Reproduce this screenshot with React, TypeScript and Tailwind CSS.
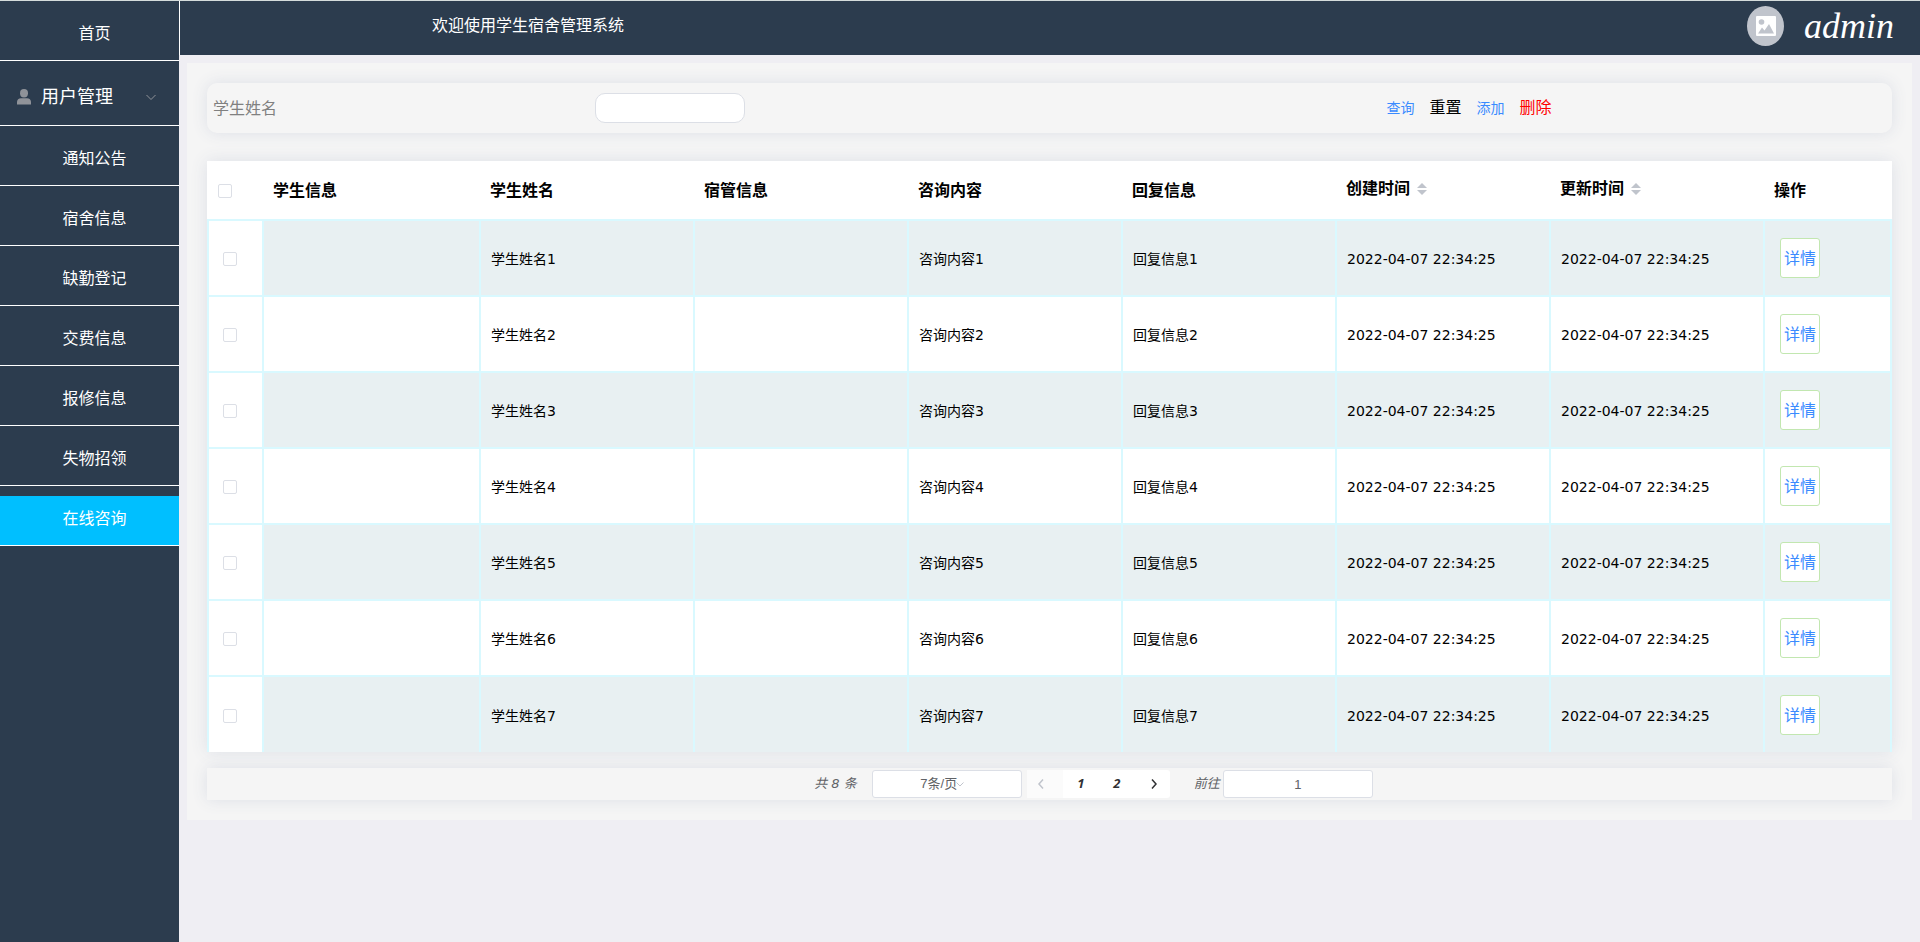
import React from "react";

const menu = ["通知公告", "宿舍信息", "缺勤登记", "交费信息", "报修信息", "失物招领", "在线咨询"];
const rows = [1, 2, 3, 4, 5, 6, 7];
const time = "2022-04-07 22:34:25";
const shadow = "shadow-[0_0_16px_#dcdfe6]";
const box = "block size-[14px] appearance-none rounded-[2px] border border-[#dcdfe6] bg-white";
const edge = "border-2 border-[#d9f9ff] group-last:border-b-0";
const cell = "border-2 border-[#d9f9ff] px-[10px] pt-[2px] group-last:border-b-0";

function SortIcon() {
  return (
    <svg width="10" height="13" viewBox="0 0 10 13" fill="#c0c4cc" aria-hidden="true">
      <path d="M5 0 10 5H0Z" />
      <path d="M5 12 0 7H10Z" />
    </svg>
  );
}

function Chevron({ d, className }: { d: string; className?: string }) {
  return (
    <svg width="12" height="12" viewBox="0 0 12 12" fill="none" stroke="currentColor" className={className} aria-hidden="true">
      <path d={d} />
    </svg>
  );
}

function Sidebar() {
  return (
    <nav className="w-[179px] shrink-0 bg-[#2c3c4e] text-base text-white">
      <a href="#home" className="mt-[10px] flex h-[50px] items-center justify-center border-b border-white pb-1 pl-[10px]">首页</a>
      <button className="flex h-[65px] w-full items-center border-b border-white pt-2 pl-[17px] text-lg">
        <svg width="14" height="16" viewBox="0 0 14 16" fill="#909399" className="mr-[10px]" aria-hidden="true">
          <ellipse cx="7" cy="4.2" rx="4" ry="4.2" />
          <path d="M0 15.500 V13 C0 10.600 1.600 9.200 4 9.200 H10 C12.400 9.200 14 10.600 14 13 V15.500 Z" />
        </svg>
        用户管理
        <Chevron d="M1.500 4 6 8.500 10.500 4" className="ml-8 text-[#909399]" />
      </button>
      {menu.map((m) => (
        <a
          key={m}
          href={"#" + m}
          className={
            "mt-[10px] flex h-[50px] items-center justify-center border-b border-white pb-1 pl-[10px] " +
            (m === "在线咨询" ? "bg-[#00bfff]" : "")
          }
        >
          {m}
        </a>
      ))}
    </nav>
  );
}

function Header() {
  return (
    <header className="flex h-[54px] items-center justify-between border-l border-white bg-[#2c3c4e] pr-[26px] pl-[252px] text-white">
      <h1 className="pb-1 text-base font-normal">欢迎使用学生宿舍管理系统</h1>
      <div className="flex items-center gap-5 pb-1">
        <span className="flex h-10 w-[37px] items-center justify-center rounded-[50%] bg-[#c0c4cc]">
          <svg width="20" height="20" viewBox="0 0 20 20" aria-hidden="true">
            <rect width="20" height="20" rx="1" fill="#fff" />
            <circle cx="5.5" cy="6" r="2.8" fill="#c0c4cc" />
            <path d="M2 17.500 6 11.500 8.500 14.500 13 8 18 17.500Z" fill="#c0c4cc" />
          </svg>
        </span>
        <span className="font-['Liberation_Serif',serif] text-4xl leading-10 italic">admin</span>
      </div>
    </header>
  );
}

function Search() {
  return (
    <form className={"grid h-[50px] grid-cols-[23%_47%_1fr] items-center rounded-[10px] bg-[#f5f5f5] " + shadow}>
      <label htmlFor="name" className="pt-[2px] pl-[6px] text-base text-[#808080]">学生姓名</label>
      <input id="name" className="h-[30px] w-[150px] rounded-[10px] border border-[#dcdfe6] bg-white px-2 text-sm" />
      <div className="flex items-center gap-[15px] text-sm">
        <button type="button" className="text-[#3a8bff]">查询</button>
        <button type="button" className="text-base text-black">重置</button>
        <button type="button" className="text-[#3a8bff]">添加</button>
        <button type="button" className="text-base text-[#ff0000]">删除</button>
      </div>
    </form>
  );
}

function Records() {
  return (
    <table className={"mt-7 w-full table-fixed border-collapse bg-white text-left text-sm text-black " + shadow}>
      <colgroup>
        <col className="w-[55px]" />
        <col className="w-[217px]" />
        <col /><col /><col /><col /><col /><col />
        <col className="w-[127px]" />
      </colgroup>
      <thead>
        <tr className="h-[59px] text-base">
          <th className="pt-[2px] pl-[10px]"><input type="checkbox" aria-label="全选" className={box} /></th>
          {["学生信息", "学生姓名", "宿管信息", "咨询内容", "回复信息"].map((t) => (
            <th key={t} className="px-[10px] pt-[2px] font-bold">{t}</th>
          ))}
          {["创建时间", "更新时间"].map((t) => (
            <th key={t} className="px-[10px] pb-[2px] font-bold">
              <button className="flex items-center gap-[7px]">{t}<SortIcon /></button>
            </th>
          ))}
          <th className="px-[10px] pt-[2px] font-bold">操作</th>
        </tr>
      </thead>
      <tbody>
        {rows.map((n) => (
          <tr key={n} className="group h-[76px] odd:bg-[#e8f0f2]">
            <td className={"bg-white pt-[2px] pl-[14px] " + edge}>
              <input type="checkbox" aria-label={"选择第" + n + "行"} className={box} />
            </td>
            <td className={cell} />
            <td className={cell}>学生姓名{n}</td>
            <td className={cell} />
            <td className={cell}>咨询内容{n}</td>
            <td className={cell}>回复信息{n}</td>
            <td className={cell}>{time}</td>
            <td className={cell}>{time}</td>
            <td className={"pl-[15px] " + edge}>
              <button className="block h-10 w-10 rounded-[3px] border border-[#c2e7b0] bg-white pt-[2px] text-base text-[#3a8bff]">详情</button>
            </td>
          </tr>
        ))}
      </tbody>
    </table>
  );
}

function Pager() {
  return (
    <div className={"mt-4 flex h-8 items-center justify-center bg-[#f5f5f5] pl-[88px] text-[13px] text-[#606266] " + shadow}>
      <span className="mr-[15px] italic">共 8 条</span>
      <div className="relative">
        <select aria-label="每页条数" className="block h-7 w-[150px] appearance-none rounded-[3px] border border-[#dcdfe6] bg-white pr-4 text-center font-['Liberation_Sans','Noto_Sans_CJK_SC',sans-serif]">
          <option>7条/页</option>
        </select>
        <Chevron d="M2.500 4.500 6 8 9.500 4.500" className="pointer-events-none absolute top-2 left-[82px] text-[#c0c4cc]" />
      </div>
      <div className="ml-[5px] flex h-7 font-['Open_Sans',sans-serif] font-bold text-[#303133] italic">
        <button aria-label="上一页" className="flex w-9 items-center justify-center bg-[#fbfbfb] pr-2 text-[#c0c4cc]">
          <Chevron d="M8 1.500 4 6 8 10.500" className="stroke-[1.5]" />
        </button>
        <button className="w-9 bg-white">1</button>
        <button className="w-9 bg-white">2</button>
        <button aria-label="下一页" className="flex w-[35px] items-center justify-center rounded-r-[3px] bg-white pl-1">
          <Chevron d="M4 1.500 8 6 4 10.500" className="stroke-[1.5]" />
        </button>
      </div>
      <label htmlFor="page" className="mr-[3px] ml-6 italic">前往</label>
      <input id="page" defaultValue="1" className="h-7 w-[150px] rounded-[3px] border border-[#dcdfe6] bg-white text-center font-['Liberation_Sans',sans-serif]" />
    </div>
  );
}

export default function App() {
  return (
    <div className="flex min-h-screen border-t border-[#d5dcdb] bg-[#efeef3] font-['DejaVu_Sans','Noto_Sans_CJK_SC',sans-serif]">
      <Sidebar />
      <div className="min-w-0 flex-1">
        <Header />
        <main className="mx-2 mt-2 bg-[#f5f5f5] p-5">
          <Search />
          <Records />
          <Pager />
        </main>
      </div>
    </div>
  );
}
